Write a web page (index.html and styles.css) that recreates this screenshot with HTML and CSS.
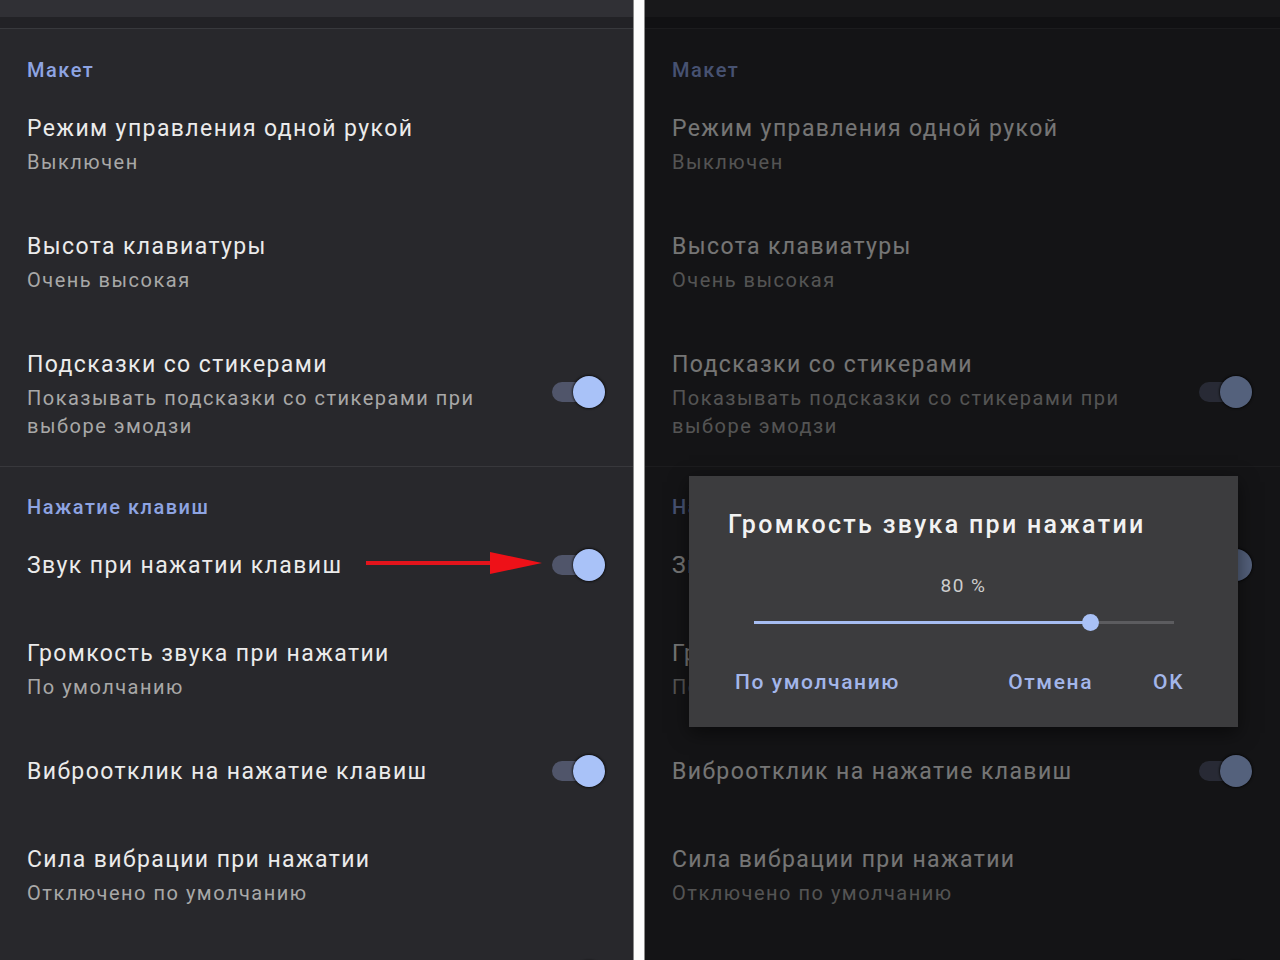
FILE: index.html
```html
<!DOCTYPE html>
<html lang="ru">
<head>
<meta charset="UTF-8" />
<meta name="viewport" content="width=device-width,initial-scale=1.0" />
<title>Настройки клавиатуры</title>
<link rel="stylesheet" href="styles.css">
</head>
<body>
  <div class="screen">
    <!-- левый экран: обычные настройки -->
    <section class="phone">
      <div class="topbar"></div>
      <div class="list">
        <div class="header">Макет</div>
        <div class="item">
          <div class="text">
            <div class="title">Режим управления одной рукой</div>
            <div class="sub">Выключен</div>
          </div>
        </div>
        <div class="item">
          <div class="text">
            <div class="title">Высота клавиатуры</div>
            <div class="sub">Очень высокая</div>
          </div>
        </div>
        <div class="item">
          <div class="text">
            <div class="title">Подсказки со стикерами</div>
            <div class="sub">Показывать подсказки со стикерами при<br>выборе эмодзи</div>
          </div>
          <span class="switch"></span>
        </div>
        <div class="divider"></div>
        <div class="header">Нажатие клавиш</div>
        <div class="item single">
          <div class="text">
            <div class="title">Звук при нажатии клавиш</div>
          </div>
          <svg class="arrow" width="176" height="26" viewBox="0 0 176 26">
            <rect x="0" y="11" width="130" height="4" fill="#e3141c"/>
            <polygon points="124,2 176,13 124,24" fill="#ee1118"/>
          </svg>
          <span class="switch"></span>
        </div>
        <div class="item">
          <div class="text">
            <div class="title">Громкость звука при нажатии</div>
            <div class="sub">По умолчанию</div>
          </div>
        </div>
        <div class="item single">
          <div class="text">
            <div class="title">Виброотклик на нажатие клавиш</div>
          </div>
          <span class="switch"></span>
        </div>
        <div class="item">
          <div class="text">
            <div class="title">Сила вибрации при нажатии</div>
            <div class="sub">Отключено по умолчанию</div>
          </div>
        </div>
        <div class="item single">
          <div class="text"><div class="title-gap"></div></div>
          <span class="switch"></span>
        </div>
      </div>
    </section>

    <!-- правый экран: тот же список под диалогом -->
    <section class="phone right">
      <div class="topbar"></div>
      <div class="list">
        <div class="header">Макет</div>
        <div class="item">
          <div class="text">
            <div class="title">Режим управления одной рукой</div>
            <div class="sub">Выключен</div>
          </div>
        </div>
        <div class="item">
          <div class="text">
            <div class="title">Высота клавиатуры</div>
            <div class="sub">Очень высокая</div>
          </div>
        </div>
        <div class="item">
          <div class="text">
            <div class="title">Подсказки со стикерами</div>
            <div class="sub">Показывать подсказки со стикерами при<br>выборе эмодзи</div>
          </div>
          <span class="switch"></span>
        </div>
        <div class="divider"></div>
        <div class="header">Нажатие клавиш</div>
        <div class="item single">
          <div class="text">
            <div class="title">Звук при нажатии клавиш</div>
          </div>
          <span class="switch"></span>
        </div>
        <div class="item">
          <div class="text">
            <div class="title">Громкость звука при нажатии</div>
            <div class="sub">По умолчанию</div>
          </div>
        </div>
        <div class="item single">
          <div class="text">
            <div class="title">Виброотклик на нажатие клавиш</div>
          </div>
          <span class="switch"></span>
        </div>
        <div class="item">
          <div class="text">
            <div class="title">Сила вибрации при нажатии</div>
            <div class="sub">Отключено по умолчанию</div>
          </div>
        </div>
        <div class="item single">
          <div class="text"><div class="title-gap"></div></div>
          <span class="switch"></span>
        </div>
      </div>

      <div class="scrim"></div>
      <div class="dialog">
        <div class="dialog-title">Громкость звука при нажатии</div>
        <div class="value">80 %</div>
        <div class="slider">
          <div class="fill" style="width:80%"></div>
          <div class="knob" style="left:80%"></div>
        </div>
        <div class="actions">
          <span class="btn">По умолчанию</span>
          <span class="spacer"></span>
          <span class="btn">Отмена</span>
          <span class="btn">OK</span>
        </div>
      </div>
    </section>
  </div>
</body>
</html>
```

FILE: styles.css
```css
body { margin:0; background:#fff; font-family: Roboto, "Noto Sans", Arial, sans-serif; overflow:hidden; }
.screen { display:flex; gap:12px; height:960px; background:#fdfdfd; }
.phone { position:relative; width:633px; height:960px; background:#28282c; overflow:hidden; box-shadow: 1px 0 0 #8a8a8a, -1px 0 0 #8a8a8a; }
.phone.right { width:635px; }

.topbar { height:17px; background:#303035; border-bottom:11px solid #222226; box-shadow: 0 1px 0 #38393d; }
.list { padding:2px 28px 0 27px; }

.header { padding:28px 0 2px; font-size:20px; line-height:24px; font-weight:500; letter-spacing:1.5px; color:#8ea4e2; }
.item { position:relative; display:flex; align-items:center; padding:26px 0; }
.item.single { padding:26px 0 24px; }
.text { flex:1; }
.title { font-size:23px; line-height:38px; letter-spacing:1.4px; color:#ebebeb; }
.title-gap { height:38px; }
.sub { font-size:20px; line-height:28px; letter-spacing:1.5px; color:#a8a8a8; }
.divider { height:1px; margin:0 -28px 0 -27px; background:#38383c; }

.switch { position:relative; width:53px; height:32px; flex:none; margin-top:-2px; }
.switch::before { content:""; position:absolute; left:0; top:6px; width:44px; height:20px; border-radius:10px; background:#50556a; }
.switch::after { content:""; position:absolute; right:0; top:0; width:32px; height:32px; border-radius:50%; background:#a9c2f8; box-shadow:0 0 2px 1px rgba(0,0,0,.6); }

.arrow { position:absolute; left:339px; top:50%; margin-top:-15px; }

.scrim { position:absolute; inset:0; background:rgba(0,0,0,.5); }

.dialog { position:absolute; left:44px; top:476px; width:549px; height:251px; background:#3c3c3e; box-shadow:0 6px 18px rgba(0,0,0,.5); }
.dialog-title { padding:33px 20px 0 39px; font-size:25px; line-height:32px; font-weight:500; letter-spacing:2.3px; color:#f2f2f2; }
.value { margin-top:33px; text-align:center; font-size:19px; line-height:24px; letter-spacing:1.5px; color:#cdcdcd; }
.slider { position:relative; height:3px; margin:23px 64px 0 65px; background:#5c5c5f; }
.fill { height:3px; background:#a6bdf2; }
.knob { position:absolute; top:-7px; width:17px; height:17px; margin-left:-8px; border-radius:50%; background:#a9c1f6; }
.actions { display:flex; align-items:center; gap:60px; margin-top:44px; padding:0 54px 0 46px; font-size:21px; line-height:28px; font-weight:500; letter-spacing:1.6px; color:#a3b6ea; }
.actions .spacer { flex:1; margin-left:-60px; }
```
